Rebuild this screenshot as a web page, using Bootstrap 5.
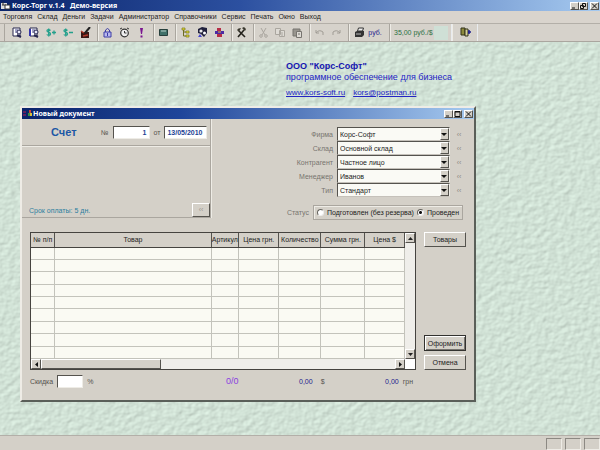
<!DOCTYPE html>
<html lang="ru">
<head>
<meta charset="utf-8">
<meta name="viewport" content="width=device-width, initial-scale=1">
<title>Корс-Торг v.1.4 Демо-версия</title>
<link rel="stylesheet" href="https://cdn.jsdelivr.net/npm/bootstrap@5.3.0/dist/css/bootstrap.min.css">
<style>
:root{--face:#d4d0c8;--navy:#1c1c8c}
body{font-family:"Liberation Sans",Arial,sans-serif;font-size:7px;line-height:9px;color:#222;background:var(--face)}
button,input,select{font:inherit;color:inherit;border-radius:0;margin:0}
.titlebar{background:linear-gradient(90deg,#0a246a,#2c50a0 40%,#a6caf0);color:#fff;height:11px;font:bold 7px/11px "Noto Sans",sans-serif;white-space:pre}
.doc-title{background:linear-gradient(90deg,#0a246a,#1f459a 35%,#a6caf0)}
.raised{background:var(--face);border:1px solid;border-color:#fff #55534e #55534e #fff}
.winbtn{width:9px;height:8px;padding:0;display:flex;align-items:center;justify-content:center}
.winbtn svg{width:7px;height:6px}
.winbtn.close-win{margin:0 1px 0 2px}
.menubar{height:12px;padding-left:3px;gap:5px;background:#d9d4cd}
.menubar a{color:#222;text-decoration:none;line-height:12px}
.toolbar{height:19px;padding-left:4px;background:#d6d2cb;border-top:1px solid #b3afa8;border-bottom:1px solid #aaa69f}
.grip{width:3px;border-left:1px solid #aaa69f}
.tools{display:flex;align-items:center;border-left:1px solid #aaa69f;box-shadow:inset 1px 0 #eeece6;padding:0 3px 0 1px}
.tools.first{border-left-color:transparent;box-shadow:none}
.tools button{border:0;background:none;padding:0;width:17px;height:15px;display:flex;align-items:center;justify-content:center}
.tools button svg{width:11px;height:11px}
.tools .printer{width:36px;gap:3px;color:var(--navy)}
.tools.rate{width:62px;padding-left:4px;color:#2b7144}
.patch{width:14px;height:14px;flex-shrink:0;background:#cfe0d6}
.desk{background:#cfe0d5}
.texture{position:absolute;inset:0;width:100%;height:100%}
.about{position:relative;padding:19px 0 0 286px;color:#2424c4;font-size:9px;line-height:11px}
.about h1{font-size:9px;line-height:11px;font-weight:bold;margin:0;color:#1515b0}
.about p{margin:0}
.about a{color:#2424c4;font-size:8px}
.doc{position:absolute;left:20px;right:124px;top:64px;background:var(--face);border:2px solid;border-color:#eeece6 #5a5f59 #5a5f59 #eeece6;color:#55534f}
.head-l{width:189px;height:99px;border-right:1px solid #aaa69f;box-shadow:1px 0 #eeece6}
.head-top{height:27px;border-bottom:1px solid #aaa69f;box-shadow:0 1px #eeece6;padding-left:29px}
.head-top h2{font-size:11px;line-height:14px;font-weight:bold;color:#1c57a5;margin:0 26px 0 0;width:24px}
.sunk{border:1px solid;border-color:#55534e #eeece6 #eeece6 #55534e;background:#fff;padding:0 2px;height:13px;min-width:0}
.head-top input{color:#1c3f94;font-weight:bold}
.num{width:37px;text-align:right}
.date{width:43px}
.term{color:#2c7f9f;padding-left:7px;border-bottom:1px solid #aaa69f}
.term .raised{width:18px;height:14px;padding:0;color:#99958e;line-height:8px}
.head-r{padding:8px 11px 0 0}
.field{display:flex;align-items:center;justify-content:flex-end;height:14px;color:#77746f}
.combo{position:relative;width:113px;height:14px;margin:0 5px 0 4px}
.combo select{appearance:none;width:100%;height:14px;padding:0 12px 0 2px;background:#fafaf5;border:1px solid;border-color:#55534e #eeece6 #c5c1ba #55534e;color:#222;line-height:11px}
.combo::before{content:"";position:absolute;right:1px;top:1px;width:9px;height:12px;background:var(--face);border:1px solid;border-color:#fff #55534e #55534e #fff;pointer-events:none}
.combo::after{content:"";position:absolute;right:3px;top:6px;border:3px solid transparent;border-top-color:#111;border-bottom:0;pointer-events:none}
.more{border:0;background:none;padding:0;width:8px;color:#8c8983;line-height:9px}
.state{border:1px solid #aaa69f;box-shadow:inset 1px 1px #eeece6;height:15px;padding:0 3px;margin-left:4px;color:#222;gap:3px}
.state input{appearance:none;width:7px;height:7px;border:1px solid;border-color:#66645f #eee #eee #66645f;border-radius:50%;background:#fff}
.state input:checked{background:radial-gradient(#111 0 1px,#fff 2px)}
.body-row{padding:13px 8px 0 8px;gap:8px}
.sheet{border:1px solid #45433f;background:#efeeea;height:138px}
.lines{border-collapse:collapse;table-layout:fixed;width:100%;height:127px;background:#fafaf3;color:#222}
.lines th{height:14px;padding:0;text-align:center;font-weight:normal;background:var(--face);border-right:1px solid #55534e;border-bottom:1px solid #45433f;overflow:hidden;white-space:nowrap}
.lines td{padding:0;border-right:1px solid #c3c3bb;border-bottom:1px solid #c3c3bb}
.vbar{width:10px}
.vbar button,.hbar button{width:10px;height:10px;padding:0;display:flex;align-items:center;justify-content:center}
.vbar svg,.hbar svg{width:5px;height:5px}
.hbar{height:10px}
.thumb{width:32%;height:10px}
.side{width:42px;flex-shrink:0}
.side .raised{height:15px;padding:0;color:#222}
.side .main{border:1px solid #33322f;box-shadow:inset 1px 1px #fff,inset -1px -1px #77746f;height:16px}
.foot{padding:5px 61px 0 8px;height:30px}
.foot>*{line-height:13px}
.foot input{width:26px}
.foot output{color:var(--navy)}
.foot .count{color:#8a3fe0;font-size:9px}
.statusbar{height:15px;border-top:1px solid #b3afa8;gap:3px;padding-top:2px}
.statusbar span{width:16px;border:1px solid;border-color:#8c8983 #eeece6 #eeece6 #8c8983}
</style>
</head>
<body class="d-flex flex-column vh-100 overflow-hidden">
<svg width="0" height="0" class="position-absolute" aria-hidden="true">
  <defs>
    <g id="mag"><path d="M1 1h7v8H1z" fill="#fff" stroke="#26264f"/><path d="M3 3h3M3 5h3" stroke="#4a4a90"/><circle cx="7" cy="5" r="2" fill="#e8e8fa" stroke="#26264f"/><path d="M5 8l4 2" stroke="#26264f" stroke-width="2"/></g>
    <g id="up"><path d="M0 4l2.500-3L5 4z" fill="#222"/></g>
  </defs>
</svg>

<header>
  <div class="titlebar d-flex align-items-center">
    <svg width="12" height="9" viewBox="0 0 12 9" aria-hidden="true"><path d="M1 2h6v6H1z" fill="#ddd"/><path d="M2 4h4M3 1v3" stroke="#333"/><path d="M5 4h5v4H5z" fill="#fff" stroke="#333"/></svg>
    <span class="flex-grow-1">Корс-Торг v.1.4   Демо-версия</span>
    <button class="raised winbtn" aria-label="Свернуть"><svg viewBox="0 0 7 6"><path d="M1 5h3" stroke="#111"/></svg></button>
    <button class="raised winbtn" aria-label="Восстановить"><svg viewBox="0 0 7 6"><path d="M2.500.5h3v3h-3zM.5 2.500h3v3h-3z" fill="#d4d0c8" stroke="#111"/></svg></button>
    <button class="raised winbtn close-win" aria-label="Закрыть"><svg viewBox="0 0 7 6"><path d="M1 .5l5 5M6 .5l-5 5" stroke="#111"/></svg></button>
  </div>
  <nav class="menubar d-flex">
    <a href="#">Торговля</a><a href="#">Склад</a><a href="#">Деньги</a><a href="#">Задачи</a><a href="#">Администратор</a><a href="#">Справочники</a><a href="#">Сервис</a><a href="#">Печать</a><a href="#">Окно</a><a href="#">Выход</a>
  </nav>
  <div class="toolbar d-flex" role="toolbar">
    <div class="grip"></div>
    <div class="tools first">
      <button aria-label="Документы"><svg viewBox="0 0 11 11"><use href="#mag"/></svg></button>
      <button aria-label="Журнал"><svg viewBox="0 0 11 11"><use href="#mag"/><path d="M1 2v7" stroke="#3535aa" stroke-width="2"/></svg></button>
      <button aria-label="Приход денег"><svg viewBox="0 0 11 11"><path d="M4.500 3.500C3 2 .8 2.500 1 4s3.500 1 3.500 3S1.500 8.500.8 7.500M2.700 1.500v8M6 5.500h4M8 3.500v4" fill="none" stroke="#24a08c" stroke-width="1.300"/></svg></button>
      <button aria-label="Расход денег"><svg viewBox="0 0 11 11"><path d="M4.500 3.500C3 2 .8 2.500 1 4s3.500 1 3.500 3S1.500 8.500.8 7.500M2.700 1.500v8M6 5.500h4" fill="none" stroke="#24a08c" stroke-width="1.300"/></svg></button>
      <button aria-label="Касса"><svg viewBox="0 0 11 11"><path d="M1 5h8v6H1z" fill="#3a1715"/><path d="M5 6l5-6" stroke="#222" stroke-width="2"/><path d="M1 4l3 2M3 9l5-1" stroke="#b23a2c" stroke-width="1.500"/></svg></button>
    </div>
    <div class="tools">
      <button aria-label="Доступ"><svg viewBox="0 0 11 11"><path d="M2 5h7v5H2z" fill="#b9b9ee" stroke="#3c3ca6"/><path d="M3.500 5V3q2-3 4 0v2M5.500 6v3" fill="none" stroke="#3c3ca6"/></svg></button>
      <button aria-label="Будильник"><svg viewBox="0 0 11 11"><circle cx="5.500" cy="6" r="3.800" fill="#eee" stroke="#333" stroke-width="1.200"/><path d="M5.500 4v2h2M1 2l2-1M10 2L8 1" fill="none" stroke="#333"/></svg></button>
      <button aria-label="Важное"><svg viewBox="0 0 11 11"><path d="M4 1h3L6 7H5zM4.500 8.500h2v2h-2z" fill="#7a1590"/></svg></button>
    </div>
    <div class="tools">
      <button aria-label="Терминал"><svg viewBox="0 0 11 11"><path d="M1.500 2.500h8v6h-8z" fill="#3f7069" stroke="#263f3c"/><path d="M3 4h5" stroke="#b8d0ca"/></svg></button>
    </div>
    <div class="tools">
      <button aria-label="Дерево"><svg viewBox="0 0 11 11"><path d="M2 1h3v2H2zM6 4h3v2H6zM6 8h3v2H6z" fill="#e6dc35" stroke="#77751d" stroke-width=".7"/><path d="M3.500 3v6H6M3.500 5H6" fill="none" stroke="#6f6d22"/></svg></button>
      <button aria-label="Партнёры"><svg viewBox="0 0 11 11"><path d="M1 2l4-2 5 1v5L7 10 4 7 1 6z" fill="#20203c"/><circle cx="4" cy="4" r="1.600" fill="#eee"/><circle cx="7.500" cy="6" r="1.500" fill="#fff"/><path d="M1 10l2-3 2 3z" fill="#4747d0"/></svg></button>
      <button aria-label="Сотрудники"><svg viewBox="0 0 11 11"><path d="M3 1h4v3H3z" fill="#b62c46"/><path d="M1 4h9v3H1z" fill="#4c2aa4"/><path d="M3 7h5v3H3z" fill="#b62c46"/><path d="M4 5h3" stroke="#e3b83c"/></svg></button>
    </div>
    <div class="tools">
      <button aria-label="Настройки"><svg viewBox="0 0 11 11"><path d="M2 10l6-7M3 4l6 6" stroke="#25231d" stroke-width="1.600"/><path d="M1 3q1-2 4-2L3 5zM6 1l3 3 1-2-2-2z" fill="#3a382f"/></svg></button>
    </div>
    <div class="tools">
      <button aria-label="Вырезать"><svg viewBox="0 0 11 11"><path d="M3 1l4 7M8 1L4 8" stroke="#aaa69f"/><circle cx="3" cy="9" r="1.300" fill="none" stroke="#aaa69f"/><circle cx="8" cy="9" r="1.300" fill="none" stroke="#aaa69f"/></svg></button>
      <button aria-label="Копировать"><svg viewBox="0 0 11 11"><path d="M.5 1.500h5v6h-5zM4.500 3.500h5v6h-5zM6 6h2M6 8h2" fill="#dedbd5" stroke="#aaa69f"/></svg></button>
      <button aria-label="Вставить"><svg viewBox="0 0 11 11"><path d="M1 2h7v7H1z" fill="#98958e" stroke="#77746f"/><path d="M4.500 4.500h5v6h-5zM6 7h2" fill="#dedbd5" stroke="#77746f"/></svg></button>
    </div>
    <div class="tools">
      <button aria-label="Отменить"><svg viewBox="0 0 11 11"><path d="M2 3v3h3M2 6q3-4 7-1v3" fill="none" stroke="#a09c95"/></svg></button>
      <button aria-label="Повторить"><svg viewBox="0 0 11 11"><path d="M9 3v3H6M9 6Q6 2 2 5v3" fill="none" stroke="#a09c95"/></svg></button>
    </div>
    <div class="tools">
      <button class="printer"><svg viewBox="0 0 11 11" aria-hidden="true"><path d="M1 5l2-1h7v4l-2 2H1z" fill="#333"/><path d="M3.500 4l1-3h5l-1 3z" fill="#eee" stroke="#333"/><path d="M2 7h5" stroke="#bbb"/></svg>руб.</button>
    </div>
    <div class="tools rate"><span class="flex-grow-1 text-nowrap">35,00 руб./$</span><span class="patch"></span></div>
    <div class="tools border-end border-secondary-subtle">
      <button class="ms-1" aria-label="Выход"><svg viewBox="0 0 11 11"><path d="M1 1h4v7H1z" fill="#8d8a3c" stroke="#33321a"/><path d="M5 2h3v7H5z" fill="#d5d09b" stroke="#33321a"/><path d="M8 5h3M9 3v4" stroke="#20208c" stroke-width="1.500"/></svg></button>
    </div>
  </div>
</header>

<main class="desk flex-grow-1 position-relative overflow-hidden">
  <svg class="texture" aria-hidden="true">
    <filter id="relief" x="0" y="0" width="100%" height="100%" color-interpolation-filters="sRGB">
      <feTurbulence type="fractalNoise" baseFrequency=".15 .19" numOctaves="2" seed="4" stitchTiles="stitch"/>
      <feColorMatrix values="0 0 0 0 0 0 0 0 0 0 0 0 0 0 0 1 0 0 0 0"/>
      <feDiffuseLighting surfaceScale=".5" diffuseConstant="1.120" lighting-color="#d1e2d6"><feDistantLight azimuth="225" elevation="63"/></feDiffuseLighting>
    </filter>
    <rect width="100%" height="100%" filter="url(#relief)"/>
  </svg>
  <section class="about">
    <h1>ООО "Корс-Софт"</h1>
    <p>программное обеспечение для бизнеса</p>
    <div class="d-flex gap-2 pt-1"><a href="#">www.kors-soft.ru</a><a href="#">kors@postman.ru</a></div>
  </section>

  <form class="doc">
    <div class="titlebar doc-title d-flex align-items-center">
      <svg width="11" height="9" viewBox="0 0 11 9" aria-hidden="true"><path d="M1 2h3v2H1zM1 5h3v2H1z" fill="#64205f"/><path d="M7 1h2v3H7z" fill="#c9443a"/><path d="M8 4h2v3H8z" fill="#d8c13c"/><path d="M6 4h2v3H6z" fill="#39904a"/></svg>
      <span class="flex-grow-1">Новый документ</span>
      <button type="button" class="raised winbtn" aria-label="Свернуть"><svg viewBox="0 0 7 6"><path d="M1 5h3" stroke="#111"/></svg></button>
      <button type="button" class="raised winbtn" aria-label="Развернуть"><svg viewBox="0 0 7 6"><path d="M1 .5h5v5H1zM1 1h5" fill="none" stroke="#111"/></svg></button>
      <button type="button" class="raised winbtn close-win" aria-label="Закрыть"><svg viewBox="0 0 7 6"><path d="M1 .5l5 5M6 .5l-5 5" stroke="#111"/></svg></button>
    </div>
    <div class="d-flex justify-content-between">
      <div class="head-l d-flex flex-column">
        <div class="head-top d-flex align-items-center">
          <h2>Счет</h2>
          <label for="num" class="me-1">№</label><input id="num" class="sunk num" value="1">
          <label for="date" class="ms-1 me-1">от</label><input id="date" class="sunk date" value="13/05/2010">
        </div>
        <div class="term d-flex justify-content-between align-items-center mt-auto"><span>Срок оплаты: 5 дн.</span><button type="button" class="raised">‹‹</button></div>
      </div>
      <div class="head-r">
        <div class="field"><label for="f1">Фирма</label><div class="combo"><select id="f1"><option>Корс-Софт</option></select></div><button type="button" class="more">‹‹</button></div>
        <div class="field"><label for="f2">Склад</label><div class="combo"><select id="f2"><option>Основной склад</option></select></div><button type="button" class="more">‹‹</button></div>
        <div class="field"><label for="f3">Контрагент</label><div class="combo"><select id="f3"><option>Частное лицо</option></select></div><button type="button" class="more">‹‹</button></div>
        <div class="field"><label for="f4">Менеджер</label><div class="combo"><select id="f4"><option>Иванов</option></select></div><button type="button" class="more">‹‹</button></div>
        <div class="field"><label for="f5">Тип</label><div class="combo"><select id="f5"><option>Стандарт</option></select></div><button type="button" class="more">‹‹</button></div>
        <div class="field mt-2"><span>Статус</span>
          <div class="state d-flex align-items-center text-nowrap">
            <input type="radio" name="st" id="s1"><label for="s1">Подготовлен (без резерва)</label>
            <input type="radio" name="st" id="s2" checked><label for="s2">Проведен</label>
          </div>
        </div>
      </div>
    </div>
    <div class="body-row d-flex">
      <div class="sheet flex-grow-1 d-flex">
        <div class="flex-grow-1 d-flex flex-column">
          <table class="lines">
            <colgroup><col style="width:6.400%"><col style="width:41.800%"><col style="width:7.400%"><col style="width:10.800%"><col style="width:11.200%"><col style="width:11.800%"><col></colgroup>
            <thead><tr><th>№ п/п</th><th>Товар</th><th>Артикул</th><th>Цена грн.</th><th>Количество</th><th>Сумма грн.</th><th>Цена $</th></tr></thead>
            <tbody>
              <tr><td></td><td></td><td></td><td></td><td></td><td></td><td></td></tr>
              <tr><td></td><td></td><td></td><td></td><td></td><td></td><td></td></tr>
              <tr><td></td><td></td><td></td><td></td><td></td><td></td><td></td></tr>
              <tr><td></td><td></td><td></td><td></td><td></td><td></td><td></td></tr>
              <tr><td></td><td></td><td></td><td></td><td></td><td></td><td></td></tr>
              <tr><td></td><td></td><td></td><td></td><td></td><td></td><td></td></tr>
              <tr><td></td><td></td><td></td><td></td><td></td><td></td><td></td></tr>
              <tr><td></td><td></td><td></td><td></td><td></td><td></td><td></td></tr>
              <tr><td></td><td></td><td></td><td></td><td></td><td></td><td></td></tr>
            </tbody>
          </table>
          <div class="hbar d-flex">
            <button type="button" class="raised" aria-label="Влево"><svg viewBox="0 0 5 5"><path d="M4 0v5L1 2.500z" fill="#111"/></svg></button>
            <div class="thumb raised"></div>
            <button type="button" class="raised ms-auto" aria-label="Вправо"><svg viewBox="0 0 5 5"><path d="M1 0v5l3-2.500z" fill="#111"/></svg></button>
          </div>
        </div>
        <div class="vbar d-flex flex-column">
          <button type="button" class="raised" aria-label="Вверх"><svg viewBox="0 0 5 5"><use href="#up"/></svg></button>
          <button type="button" class="raised mt-auto" aria-label="Вниз"><svg viewBox="0 0 5 5"><path d="M0 1l2.500 3L5 1z" fill="#222"/></svg></button>
          <div class="hbar bg-white"></div>
        </div>
      </div>
      <div class="side d-flex flex-column">
        <button type="button" class="raised">Товары</button>
        <button type="submit" class="raised main mt-auto">Оформить</button>
        <button type="button" class="raised mt-1">Отмена</button>
      </div>
    </div>
    <div class="foot d-flex justify-content-between align-items-start">
      <div class="d-flex"><label for="disc">Скидка</label><input id="disc" class="sunk mx-1"><span>%</span></div>
      <output class="count ps-5 ms-4">0/0</output>
      <div class="d-flex gap-2"><output>0,00</output><span>$</span></div>
      <div class="d-flex gap-1"><output>0,00</output><span>грн</span></div>
    </div>
  </form>
</main>
<footer class="statusbar d-flex justify-content-end"><span></span><span></span><span></span></footer>
<script src="https://cdn.jsdelivr.net/npm/bootstrap@5.3.0/dist/js/bootstrap.bundle.min.js"></script>
</body>
</html>
